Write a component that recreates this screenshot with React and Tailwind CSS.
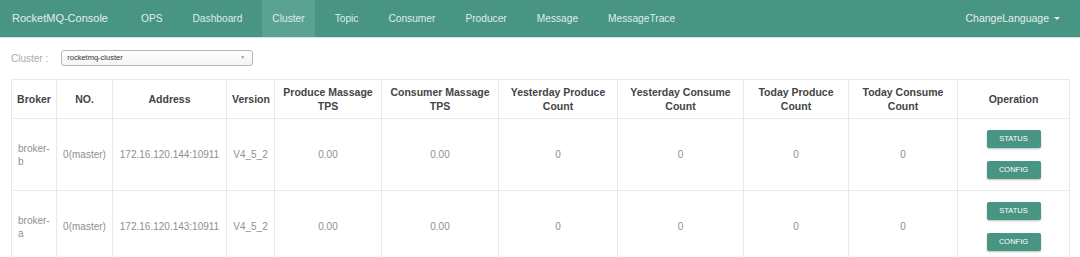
import React from 'react';

const navItems = ['OPS', 'Dashboard', 'Cluster', 'Topic', 'Consumer', 'Producer', 'Message', 'MessageTrace'];

const columns = [
    { title: ['Broker'], w: 'w-[45px]' },
    { title: ['NO.'], w: 'w-[56px]' },
    { title: ['Address'], w: 'w-[114px]' },
    { title: ['Version'], w: 'w-[48px]' },
    { title: ['Produce Massage', 'TPS'], w: 'w-[107px]' },
    { title: ['Consumer Massage', 'TPS'], w: 'w-[117px]' },
    { title: ['Yesterday Produce', 'Count'], w: 'w-[119px]' },
    { title: ['Yesterday Consume', 'Count'], w: 'w-[126px]' },
    { title: ['Today Produce', 'Count'], w: 'w-[105px]' },
    { title: ['Today Consume', 'Count'], w: 'w-[109px]' },
    { title: ['Operation'], w: 'w-[112px]' },
];

const brokers = [
    { name: ['broker-', 'b'], no: '0(master)', addr: '172.16.120.144:10911', version: 'V4_5_2' },
    { name: ['broker-', 'a'], no: '0(master)', addr: '172.16.120.143:10911', version: 'V4_5_2' },
];

function OpButton({ label }) {
    return (
        <button className="w-[54px] h-[18px] bg-[#489583] text-white text-[7.5px] leading-none rounded-[2px] shadow-[0_1px_2px_rgba(0,0,0,0.25)]">
            {label}
        </button>
    );
}

function App() {
    return (
        <div className="w-[1080px] h-[257px] overflow-hidden bg-white font-['Liberation_Sans',Arial,sans-serif]">
            {/* top navbar */}
            <nav className="h-[38px] bg-[#489583] border-b border-[#cfe6df] flex items-stretch">
                <div className="w-[131px] pl-[12px] flex items-center text-[11px] text-[#e3efec]">RocketMQ-Console</div>
                <ul className="flex items-stretch gap-[10px]">
                    {navItems.map(item => (
                        <li
                            key={item}
                            className={`px-[10px] flex items-center text-[10.2px] text-[#deedea] ${item === 'Cluster' ? 'bg-[#5aa392]' : ''}`}
                        >
                            {item}
                        </li>
                    ))}
                </ul>
                <div className="ml-auto pr-[20px] flex items-center gap-[5px] text-[10.5px] text-[#e3efec]">
                    ChangeLanguage
                    <span className="w-0 h-0 border-l-[3px] border-r-[3px] border-t-[3px] border-l-transparent border-r-transparent border-t-[#e3efec]" />
                </div>
            </nav>

            {/* cluster select */}
            <div className="mt-[12px] px-[11px] flex items-center gap-[13px]">
                <span className="text-[10px] text-[#aaaaaa]">Cluster :</span>
                <div className="w-[192px] h-[16px] border border-[#b5b5b5] rounded-[3px] bg-gradient-to-b from-white to-[#f4f4f4] flex items-center justify-between pl-[5px] pr-[7px]">
                    <span className="text-[7.5px] text-[#333]">rocketmq-cluster</span>
                    <span className="text-[5px] text-[#999]">▼</span>
                </div>
            </div>

            {/* broker table */}
            <table className="mt-[13px] ml-[11px] w-[1058px] table-fixed border-collapse">
                <colgroup>
                    {columns.map((c, i) => <col key={i} className={c.w} />)}
                </colgroup>
                <thead>
                    <tr className="h-[39px]">
                        {columns.map((c, i) => (
                            <th key={i} className="border border-[#e9e9e9] px-[5px] text-center text-[10.5px] leading-[14px] font-bold text-[#444]">
                                {c.title.map((t, j) => <div key={j} className="whitespace-nowrap">{t}</div>)}
                            </th>
                        ))}
                    </tr>
                </thead>
                <tbody>
                    {brokers.map(b => (
                        <tr key={b.addr} className="h-[72px] text-[10px] text-[#8f8f8f]">
                            <td className="border border-[#e9e9e9] px-[6px] text-left leading-[13px]">
                                <div>{b.name[0]}</div>
                                <div>{b.name[1]}</div>
                            </td>
                            <td className="border border-[#e9e9e9] text-center">{b.no}</td>
                            <td className="border border-[#e9e9e9] text-center">{b.addr}</td>
                            <td className="border border-[#e9e9e9] text-center">{b.version}</td>
                            <td className="border border-[#e9e9e9] text-center">0.00</td>
                            <td className="border border-[#e9e9e9] text-center">0.00</td>
                            <td className="border border-[#e9e9e9] text-center">0</td>
                            <td className="border border-[#e9e9e9] text-center">0</td>
                            <td className="border border-[#e9e9e9] text-center">0</td>
                            <td className="border border-[#e9e9e9] text-center">0</td>
                            <td className="border border-[#e9e9e9]">
                                <div className="flex flex-col items-center gap-[13px]">
                                    <OpButton label="STATUS" />
                                    <OpButton label="CONFIG" />
                                </div>
                            </td>
                        </tr>
                    ))}
                </tbody>
            </table>
        </div>
    );
}

export default App;
